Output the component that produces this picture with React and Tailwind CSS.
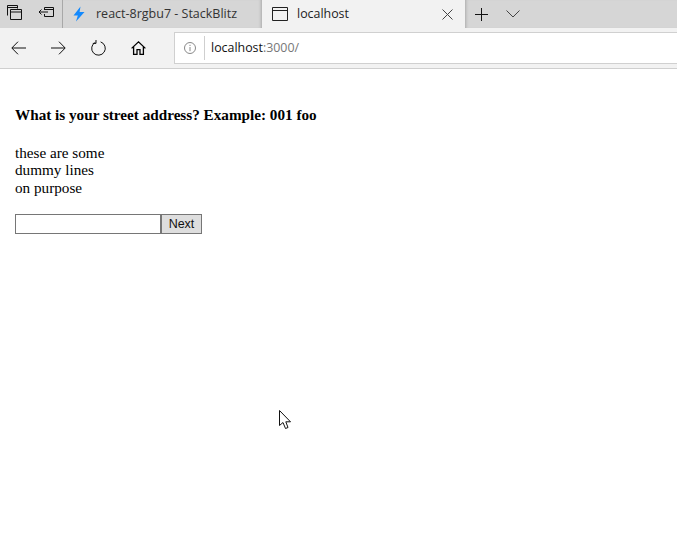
import React from "react";

const ui = { fontFamily: '"Open Sans", "Noto Sans", sans-serif' };

function TabBar() {
  return (
    <div className="flex h-[28px] bg-[#d6d6d6]">
      <div className="flex w-[63px] shrink-0 items-center border-r border-[#a8a8a8]">
        {/* tab previews */}
        <svg className="ml-[7px] h-[18px] w-[15px]" viewBox="0 0 15 18" fill="none" stroke="#111" strokeWidth="1">
          <path d="M0.5 10.5V0.5H10.5V3.5M1 2.5H10" />
          <path d="M3.5 4.5H14.5V14.5H3.5V4.5ZM3.5 7H14.5" />
        </svg>
        {/* set aside tabs */}
        <svg className="ml-[16px] h-[18px] w-[17px]" viewBox="0 0 17 18" fill="none" stroke="#111" strokeWidth="1">
          <path d="M6.5 5V2.5H15.5V11.5H6.5V9M6.5 4.5H15.5M1 7H10M3.5 4.5L1 7L3.5 9.5" />
        </svg>
      </div>
      <div className="flex w-[199px] shrink-0 items-center bg-[#d6d6d6] pl-[10px] shadow-[inset_-3px_0_3px_-2px_#aaa]">
        <svg className="h-[16px] w-[12px]" viewBox="0 0 12 16">
          <path d="M7.5 0.5L0.5 9.5H4.8L3 15.5L11.5 6H6.6L7.5 0.5Z" fill="#1389fd" />
        </svg>
        <span className="ml-[11px] text-[12.5px] text-[#333]" style={ui}>react-8rgbu7 - StackBlitz</span>
      </div>
      <div className="flex w-[203px] shrink-0 items-center bg-[#f2f2f2] pl-[10px]">
        <svg className="h-[14px] w-[16px]" viewBox="0 0 16 14" fill="none" stroke="#222" strokeWidth="1">
          <path d="M0.5 0.5H15.5V13.5H0.5V0.5ZM0.5 3.5H15.5" />
        </svg>
        <span className="ml-[9px] text-[12.4px] text-[#222]" style={ui}>localhost</span>
        <svg className="ml-[93px] h-[11px] w-[11px]" viewBox="0 0 11 11" fill="none" stroke="#444" strokeWidth="1">
          <path d="M0.5 0.5L10.5 10.5M10.5 0.5L0.5 10.5" />
        </svg>
      </div>
      <div className="flex flex-1 items-center shadow-[inset_3px_0_3px_-2px_#aaa]">
        <svg className="ml-[10px] h-[13px] w-[13px]" viewBox="0 0 13 13" fill="none" stroke="#111" strokeWidth="1">
          <path d="M6.5 0V13M0 6.5H13" />
        </svg>
        <svg className="ml-[18px] h-[8px] w-[14px]" viewBox="0 0 14 8" fill="none" stroke="#444" strokeWidth="1">
          <path d="M0.5 0.5L7 7L13.5 0.5" />
        </svg>
      </div>
    </div>
  );
}

function Toolbar() {
  return (
    <div className="flex h-[41px] items-start border-b border-[#cfcfcf] bg-[#f2f2f2]">
      <div className="flex h-[40px] w-[174px] shrink-0 items-center">
        <svg className="ml-[11px] h-[14px] w-[15px]" viewBox="0 0 15 14" fill="none" stroke="#111" strokeWidth="1">
          <path d="M15 7H1M7 0.7L0.8 7L7 13.3" />
        </svg>
        <svg className="ml-[25px] h-[14px] w-[15px]" viewBox="0 0 15 14" fill="none" stroke="#111" strokeWidth="1">
          <path d="M0 7H14M8 0.7L14.2 7L8 13.3" />
        </svg>
        <svg className="ml-[25px] h-[16px] w-[15px]" viewBox="0 0 15 16" fill="none" stroke="#111" strokeWidth="1">
          <path d="M4.4 2.3A6.8 6.8 0 1 0 9.6 1.9M5 0V3.4H1.8" />
        </svg>
        <svg className="ml-[25px] h-[14px] w-[15px]" viewBox="0 0 15 14" fill="none" stroke="#000" strokeWidth="1.3">
          <path d="M0.6 7.4L7.5 0.9L14.4 7.4M2.6 5.8V13.3H6V8.7H9V13.3H12.4V5.8" />
        </svg>
      </div>
      <div className="mt-[4px] flex h-[32px] flex-1 items-center border border-r-0 border-[#d0d0d0] bg-white">
        <svg className="ml-[9px] h-[12px] w-[12px]" viewBox="0 0 12 12" fill="none" stroke="#888" strokeWidth="1">
          <circle cx="6" cy="6" r="5.5" />
          <path d="M6 5V9.2M6 2.8V4" />
        </svg>
        <div className="ml-[8px] h-[24px] w-px bg-[#cfcfcf]" />
        <span className="ml-[6px] text-[12.4px] text-[#111]" style={ui}>
          localhost<span className="text-[#777]">:3000/</span>
        </span>
      </div>
    </div>
  );
}

export default function App() {
  return (
    <div className="relative h-[542px] w-[677px] overflow-hidden bg-white">
      <TabBar />
      <Toolbar />
      <main className="px-[15px] pt-[37px] text-[15.2px] leading-[17.5px] text-black" style={{ fontFamily: '"Liberation Serif", serif' }}>
        <h3 className="font-bold">What is your street address? Example: 001 foo</h3>
        <p className="mt-[20px]">these are some<br />dummy lines<br />on purpose</p>
        <form className="mt-[18px] flex h-[20px]" onSubmit={(e) => e.preventDefault()}>
          <input type="text" className="h-[20px] w-[146px] border border-[#767676] bg-white" />
          <button type="button" className="h-[20px] w-[41px] border border-[#767676] bg-[#dedede] text-[12.5px] leading-[18px] text-[#111]" style={{ fontFamily: '"Liberation Sans", sans-serif' }}>
            Next
          </button>
        </form>
      </main>
      {/* mouse pointer */}
      <svg className="absolute left-[279px] top-[410px] h-[20px] w-[13px]" viewBox="0 0 13 20" fill="#fff" stroke="#111" strokeWidth="1">
        <path d="M0.5 0.5V15.5L4 12.5L6.5 18.5L9 17.5L6.8 11.8H11.5L0.5 0.5Z" />
      </svg>
    </div>
  );
}
